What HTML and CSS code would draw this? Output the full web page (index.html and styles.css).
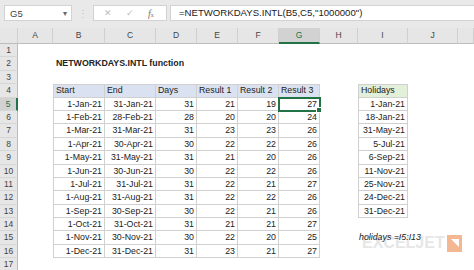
FILE: index.html
```html
<!DOCTYPE html>
<html lang="en">
<head>
<meta charset="UTF-8">
<title>NETWORKDAYS.INTL function</title>
<link rel="stylesheet" href="styles.css">
</head>
<body>

<div class="toolbar">
    <div class="namebox">
        <span>G5</span>
        <span class="drop">&#9662;</span>
    </div>
    <div class="grip">&#8942;</div>
    <div class="buttons">
        <span class="btn">&#10005;</span>
        <span class="btn">&#10003;</span>
        <span class="fx"><i>f</i><small>x</small></span>
    </div>
    <div class="formula">=NETWORKDAYS.INTL(B5,C5,"1000000")</div>
</div>

<div class="sheet" id="sheet">
    <!-- cells are built by the script below -->
</div>

<div class="watermark">EXCELJET<span class="logo"></span></div>

<script>
var cols = ['A', 'B', 'C', 'D', 'E', 'F', 'G', 'H', 'I', 'J', ''];
var rows = [
    ['1-Jan-21', '31-Jan-21', 31, 21, 19, 27],
    ['1-Feb-21', '28-Feb-21', 28, 20, 20, 24],
    ['1-Mar-21', '31-Mar-21', 31, 23, 23, 26],
    ['1-Apr-21', '30-Apr-21', 30, 22, 22, 26],
    ['1-May-21', '31-May-21', 31, 21, 20, 26],
    ['1-Jun-21', '30-Jun-21', 30, 22, 22, 26],
    ['1-Jul-21', '31-Jul-21', 31, 22, 21, 27],
    ['1-Aug-21', '31-Aug-21', 31, 22, 22, 26],
    ['1-Sep-21', '30-Sep-21', 30, 22, 21, 26],
    ['1-Oct-21', '31-Oct-21', 31, 21, 21, 27],
    ['1-Nov-21', '30-Nov-21', 30, 22, 20, 25],
    ['1-Dec-21', '31-Dec-21', 31, 23, 21, 27]
];
var holidays = ['1-Jan-21', '18-Jan-21', '31-May-21', '5-Jul-21', '6-Sep-21',
    '11-Nov-21', '25-Nov-21', '24-Dec-21', '31-Dec-21'];
var heads = ['Start', 'End', 'Days', 'Result 1', 'Result 2', 'Result 3'];

var sheet = document.getElementById('sheet');

function cell(cls, text) {
    var el = document.createElement('div');
    el.className = cls;
    if (text !== undefined) el.textContent = text;
    sheet.appendChild(el);
    return el;
}

// column headers
cell('corner');
cols.forEach(function(c) {
    cell(c === 'G' ? 'colhead active' : 'colhead', c);
});

for (var r = 1; r <= 17; r++) {
    cell(r === 5 ? 'rowhead active' : 'rowhead', r);
    for (var c = 0; c < cols.length; c++) {
        var cls = 'c';
        var text = '';
        if (r === 2 && c === 1) {
            cls += ' title';
            text = 'NETWORKDAYS.INTL function';
        } else if (r === 15 && c === 8) {
            cls += ' note';
            text = 'holidays =I5:I13';
        } else if (r >= 4 && r <= 16 && c >= 1 && c <= 6) {
            cls += ' t';
            if (c === 1) cls += ' first';
            if (r === 4) {
                cls += ' head';
                text = heads[c - 1];
            } else {
                cls += ' num';
                text = rows[r - 5][c - 1];
                if (r === 5 && c === 6) cls += ' sel';
            }
        } else if (r >= 4 && r <= 13 && c === 8) {
            cls += ' t first';
            if (r === 4) {
                cls += ' head green';
                text = 'Holidays';
            } else {
                cls += ' num';
                text = holidays[r - 5];
            }
        }
        cell(cls, text);
    }
}
</script>
</body>
</html>
```

FILE: styles.css
```css
body, html {
    margin: 0;
    height: 100%;
    overflow: hidden;
    background: #fff;
    font-family: "Liberation Sans", Arial, sans-serif;
}
.toolbar {
    height: 28px;
    background: #e9e9e9;
    display: flex;
    align-items: center;
    padding: 0 0 2px 4px;
    box-sizing: border-box;
    color: #444;
    font-size: 9.5px;
}
.namebox {
    width: 68px;
    height: 16px;
    background: #fff;
    border: 1px solid #d2d2d2;
    box-sizing: border-box;
    display: flex;
    align-items: center;
    justify-content: space-between;
    padding: 0 4px 0 5px;
}
.drop {
    font-size: 8px;
    color: #666;
}
.grip {
    width: 21px;
    text-align: center;
    color: #c4c4c4;
    font-size: 10px;
}
.buttons {
    width: 74px;
    height: 16px;
    background: #fff;
    border: 1px solid #d2d2d2;
    box-sizing: border-box;
    display: flex;
    align-items: center;
    padding-left: 10px;
    gap: 14px;
    color: #bdbdbd;
}
.btn {
    font-size: 9px;
}
.fx {
    color: #777;
    font-family: "Liberation Serif", serif;
    font-size: 10px;
}
.fx small {
    font-size: 6px;
}
.formula {
    flex: 1;
    height: 16px;
    margin-left: 3px;
    background: #fff;
    border: 1px solid #d2d2d2;
    border-right: none;
    box-sizing: border-box;
    padding-left: 8px;
    line-height: 14px;
    color: #222;
    font-size: 9.6px;
}

.sheet {
    display: grid;
    grid-template-columns: 18px 35px 52px 51px 41px 41px 41px 41px 38px 50px 50px 16px;
    grid-template-rows: 16px repeat(17, 13.4px);
    font-size: 8.8px;
    color: #222;
}
.corner {
    background: #e6e6e6;
    border-right: 1px solid #d0d0d0;
    border-bottom: 1px solid #bdbdbd;
}
.colhead {
    background: #e6e6e6;
    border-right: 1px solid #d0d0d0;
    border-bottom: 1px solid #bdbdbd;
    text-align: center;
    line-height: 15px;
    color: #444;
    font-size: 8.5px;
}
.colhead.active {
    background: #d2d2d2;
    border-bottom: 2px solid #217346;
    color: #217346;
}
.rowhead {
    background: #e6e6e6;
    border-right: 1px solid #bdbdbd;
    border-bottom: 1px solid #d6d6d6;
    text-align: center;
    color: #444;
    font-size: 8.5px;
    line-height: 13px;
}
.rowhead.active {
    background: #d2d2d2;
    border-right: 2px solid #217346;
    color: #217346;
}
.c {
    box-sizing: border-box;
    white-space: nowrap;
    line-height: 12.4px;
    padding: 0 2px;
    position: relative;
}
.t {
    border-right: 1px solid #d0d0d0;
    border-bottom: 1px solid #d0d0d0;
}
.t.first {
    border-left: 1px solid #d0d0d0;
}
.head {
    background: #dae2f1;
    border-top: 1px solid #d0d0d0;
    line-height: 11.4px;
}
.head.green {
    background: #e2efd9;
}
.num {
    text-align: right;
}
.sel {
    outline: 2px solid #217346;
    outline-offset: -1px;
    z-index: 1;
}
.sel::after {
    content: "";
    position: absolute;
    right: -3px;
    bottom: -3px;
    width: 4px;
    height: 4px;
    background: #217346;
    border: 1px solid #fff;
}
.title {
    font-weight: bold;
    overflow: visible;
    padding-left: 3px;
}
.note {
    font-style: italic;
    overflow: visible;
    padding-left: 1px;
    z-index: 2;
}
.watermark {
    position: absolute;
    left: 362px;
    top: 234px;
    font-size: 16px;
    font-weight: bold;
    color: #e6e6e6;
    display: flex;
    align-items: center;
    gap: 2px;
}
.logo {
    width: 15px;
    height: 17px;
    background: #f3b892;
    position: relative;
}
.logo::after {
    content: "";
    position: absolute;
    left: 4px;
    top: 4px;
    border-left: 8px solid transparent;
    border-bottom: 8px solid #fff;
    transform: rotate(-90deg);
}
```
